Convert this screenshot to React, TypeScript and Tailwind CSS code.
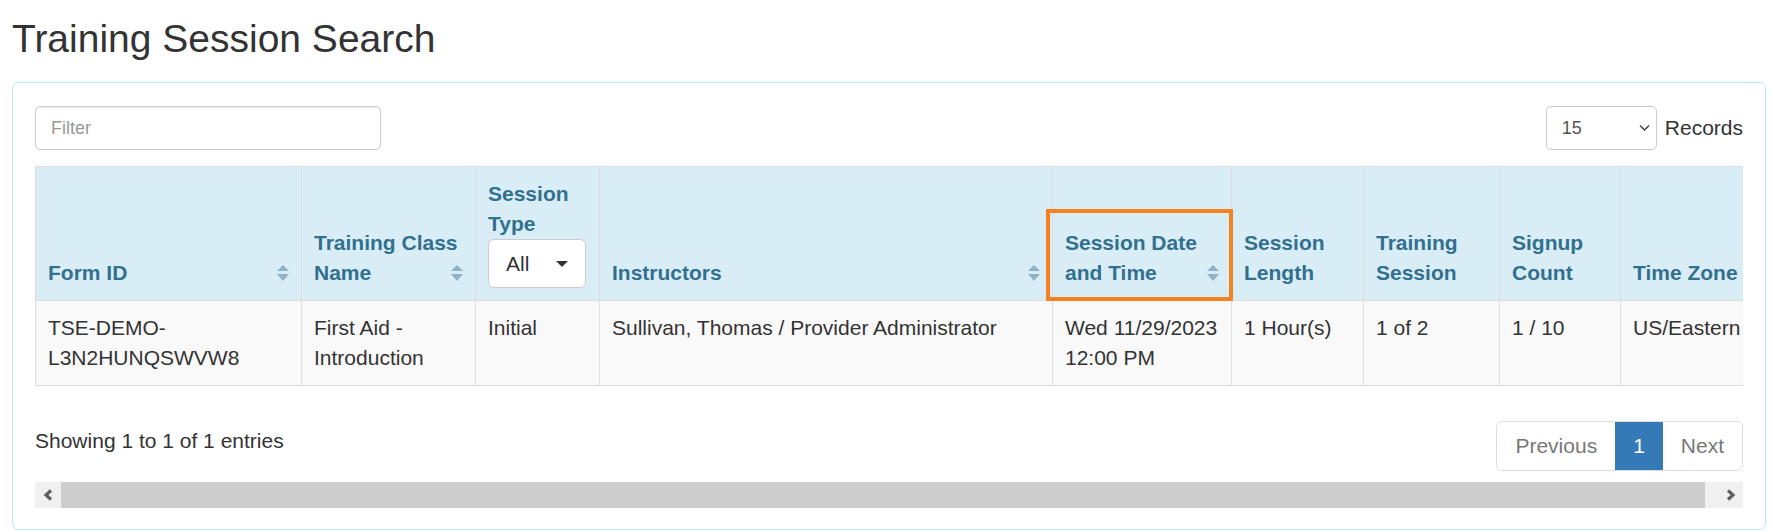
const FONT = "font-['Liberation_Sans',Arial,Helvetica,sans-serif]";

type Col = {
  w: string;
  label: string[];
  sort?: boolean;
  select?: boolean;
  highlight?: boolean;
};

const COLS: Col[] = [
  { w: "w-[266px]", label: ["Form ID"], sort: true },
  { w: "w-[174px]", label: ["Training Class", "Name"], sort: true },
  { w: "w-[124px]", label: ["Session", "Type"], select: true },
  { w: "w-[453px]", label: ["Instructors"], sort: true },
  { w: "w-[179px]", label: ["Session Date", "and Time"], sort: true, highlight: true },
  { w: "w-[132px]", label: ["Session", "Length"] },
  { w: "w-[136px]", label: ["Training", "Session"] },
  { w: "w-[121px]", label: ["Signup", "Count"] },
  { w: "w-[140px]", label: ["Time Zone"] },
];

const ROW: string[][] = [
  ["TSE-DEMO-", "L3N2HUNQSWVW8"],
  ["First Aid -", "Introduction"],
  ["Initial"],
  ["Sullivan, Thomas / Provider Administrator"],
  ["Wed 11/29/2023", "12:00 PM"],
  ["1 Hour(s)"],
  ["1 of 2"],
  ["1 / 10"],
  ["US/Eastern"],
];

function SortIcon() {
  return (
    <svg
      className="absolute right-[12px] bottom-[19px]"
      width="12"
      height="16"
      viewBox="0 0 12 16"
    >
      <path d="M0 6 L6 0 L12 6 Z" fill="#8fb2c6" />
      <path d="M0 9 L12 9 L6 16 Z" fill="#8fb2c6" />
    </svg>
  );
}

function Lines({ lines }: { lines: string[] }) {
  return (
    <>
      {lines.map((l, i) => (
        <div key={i} className="whitespace-nowrap">
          {l}
        </div>
      ))}
    </>
  );
}

function Chevron({ dir }: { dir: "left" | "right" }) {
  return (
    <svg width="11" height="12" viewBox="0 0 11 12">
      <polyline
        points={dir === "left" ? "8,1.5 3,6 8,10.5" : "3,1.5 8,6 3,10.5"}
        fill="none"
        stroke="#5f5f5f"
        strokeWidth="3.2"
      />
    </svg>
  );
}

export default function App() {
  return (
    <div className={`${FONT} bg-white text-[#333] min-h-[532px]`}>
      <h1 className="pl-[12px] pt-[17px] text-[39px] leading-[43px] font-normal text-[#333]">
        Training Session Search
      </h1>

      <div className="ml-[12px] mt-[22px] w-[1754px] rounded-[6px] border border-[#bce8f1] pt-[23px] px-[22px] pb-[21px]">
        {/* top controls */}
        <div className="flex h-[44px] items-center justify-between">
          <input
            placeholder="Filter"
            className="h-[44px] w-[346px] rounded-[5px] border border-[#ccc] px-[15px] text-[18px] text-[#555] shadow-[inset_0_1px_1px_rgba(0,0,0,0.075)] outline-none placeholder:text-[#999]"
          />
          <div className="flex items-center">
            <div className="flex h-[44px] w-[111px] items-center justify-between rounded-[5px] border border-[#ccc] pl-[15px] pr-[6px] text-[18px] text-[#555]">
              <span>15</span>
              <svg width="11" height="8" viewBox="0 0 11 8">
                <polyline points="1,1.5 5.5,6 10,1.5" fill="none" stroke="#444" strokeWidth="1.5" />
              </svg>
            </div>
            <span className="ml-[8px] text-[21px] leading-[30px]">Records</span>
          </div>
        </div>

        {/* table */}
        <div className="mt-[16px] overflow-hidden">
          <table className="w-[1725px] table-fixed border-collapse text-[21px] leading-[30px]">
            <colgroup>
              {COLS.map((c, i) => (
                <col key={i} className={c.w} />
              ))}
            </colgroup>
            <thead>
              <tr className="bg-[#d9edf7]">
                {COLS.map((c, i) => (
                  <th
                    key={i}
                    className="relative border border-[#ddd] p-[12px] text-left align-bottom font-bold text-[#31708f]"
                  >
                    <Lines lines={c.label} />
                    {c.select && (
                      <div className="flex h-[49px] w-[98px] items-center justify-between rounded-[6px] border border-[#ccc] bg-white pl-[17px] pr-[17px] font-normal text-[#333]">
                        <span>All</span>
                        <span className="h-0 w-0 border-x-[6px] border-t-[6px] border-x-transparent border-t-[#333]" />
                      </div>
                    )}
                    {c.sort && <SortIcon />}
                    {c.highlight && (
                      <span className="pointer-events-none absolute -left-[7px] top-[42px] -right-[2px] -bottom-[1px] border-[4px] border-[#f5821f]" />
                    )}
                  </th>
                ))}
              </tr>
            </thead>
            <tbody>
              <tr className="bg-[#f9f9f9]">
                {ROW.map((cell, i) => (
                  <td key={i} className="border border-[#ddd] p-[12px] align-top">
                    <Lines lines={cell} />
                  </td>
                ))}
              </tr>
            </tbody>
          </table>
        </div>

        {/* footer */}
        <div className="mt-[35px] flex items-start justify-between">
          <div className="pt-[5px] text-[21px] leading-[30px]">Showing 1 to 1 of 1 entries</div>
          <div className="flex overflow-hidden rounded-[6px] border border-[#ddd] text-[21px] leading-[30px]">
            <span className="bg-white px-[18px] py-[9px] text-[#777]">Previous</span>
            <span className="bg-[#337ab7] px-[18px] py-[9px] text-white">1</span>
            <span className="bg-white px-[18px] py-[9px] text-[#777]">Next</span>
          </div>
        </div>

        {/* horizontal scrollbar */}
        <div className="mt-[11px] flex h-[26px] bg-[#f0f0f0]">
          <div className="flex w-[26px] items-center justify-center">
            <Chevron dir="left" />
          </div>
          <div className="flex-1 bg-[#cdcdcd]" />
          <div className="w-[12px]" />
          <div className="flex w-[26px] items-center justify-center">
            <Chevron dir="right" />
          </div>
        </div>
      </div>
    </div>
  );
}
